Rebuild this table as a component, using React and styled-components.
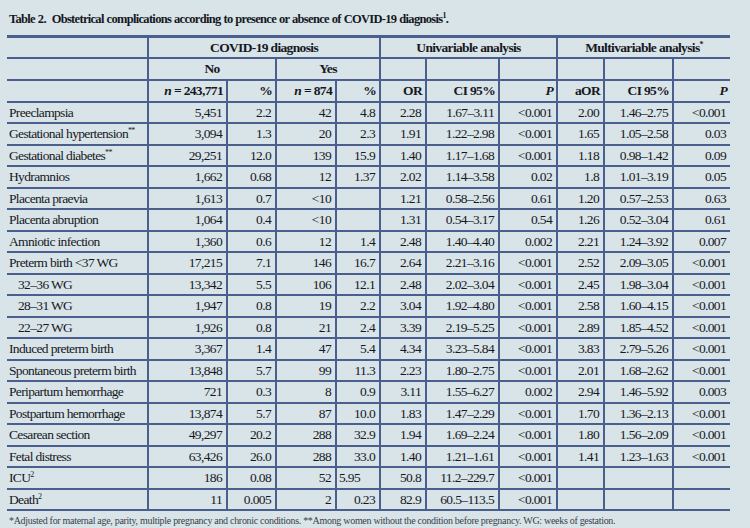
import styled, { createGlobalStyle } from 'styled-components';

const GlobalStyle = createGlobalStyle`
   html, body {
      margin: 0;
      padding: 0;
      background: #d8e4e8;
      overflow: hidden;
   }
   body {
      font-family: "Liberation Serif", "Times New Roman", serif;
      color: #16181f;
   }
`;

const LINE = '#4a5f8e';

const Page = styled.div`
   width: 750px;
   height: 528px;
   padding: 11px 0 0 7px;
   box-sizing: border-box;
   background: #d8e4e8;
`;

const Title = styled.h1`
   margin: 0 0 8px 2px;
   font-size: 12.5px;
   font-weight: bold;
   letter-spacing: -0.7px;
   word-spacing: 0.5px;
   line-height: 16px;
   sup {
      font-size: 8px;
      line-height: 0;
   }
`;

const Table = styled.table`
   width: 723px;
   table-layout: fixed;
   border-collapse: collapse;
   border-top: 3px solid ${LINE};
   border-bottom: 2px solid ${LINE};
   font-size: 13.5px;
   letter-spacing: -0.65px;
`;

const Row = styled.tr`
   height: ${(p) => (p.$head ? '21.7px' : '21.5px')};
`;

const HeadCell = styled.th`
   border: 2px solid ${LINE};
   border-top: none;
   padding: 0 3px;
   font-weight: bold;
   text-align: ${(p) => p.$align || 'center'};
   white-space: nowrap;
   &:first-child { border-left: none; }
   &:last-child { border-right: none; }
   i { font-style: italic; }
   sup {
      font-size: 8px;
      line-height: 0;
   }
`;

const Cell = styled.td`
   border: 2px solid ${LINE};
   padding: 1px ${(p) => (p.$align === 'left' ? '2px' : '4px')} 0
      ${(p) => (p.$indent ? '11px' : p.$align === 'left' ? '2px' : '4px')};
   text-align: ${(p) => p.$align || 'right'};
   white-space: nowrap;
   &:first-child { border-left: none; }
   &:last-child { border-right: none; }
   sup {
      font-size: 8px;
      line-height: 0;
   }
`;

const Footnote = styled.p`
   margin: 4px 0 0 2px;
   font-size: 10px;
   line-height: 12px;
   color: #3a3f4c;
   letter-spacing: -0.3px;
   white-space: nowrap;
`;

const widths = [141, 79, 49, 60, 44, 46, 73, 58, 47, 69, 57];

const rows = [
   ['Preeclampsia', '5,451', '2.2', '42', '4.8', '2.28', '1.67–3.11', '<0.001', '2.00', '1.46–2.75', '<0.001'],
   [<>Gestational hypertension<sup>**</sup></>, '3,094', '1.3', '20', '2.3', '1.91', '1.22–2.98', '<0.001', '1.65', '1.05–2.58', '0.03'],
   [<>Gestational diabetes<sup>**</sup></>, '29,251', '12.0', '139', '15.9', '1.40', '1.17–1.68', '<0.001', '1.18', '0.98–1.42', '0.09'],
   ['Hydramnios', '1,662', '0.68', '12', '1.37', '2.02', '1.14–3.58', '0.02', '1.8', '1.01–3.19', '0.05'],
   ['Placenta praevia', '1,613', '0.7', '<10', '', '1.21', '0.58–2.56', '0.61', '1.20', '0.57–2.53', '0.63'],
   ['Placenta abruption', '1,064', '0.4', '<10', '', '1.31', '0.54–3.17', '0.54', '1.26', '0.52–3.04', '0.61'],
   ['Amniotic infection', '1,360', '0.6', '12', '1.4', '2.48', '1.40–4.40', '0.002', '2.21', '1.24–3.92', '0.007'],
   ['Preterm birth <37 WG', '17,215', '7.1', '146', '16.7', '2.64', '2.21–3.16', '<0.001', '2.52', '2.09–3.05', '<0.001'],
   ['32–36 WG', '13,342', '5.5', '106', '12.1', '2.48', '2.02–3.04', '<0.001', '2.45', '1.98–3.04', '<0.001', true],
   ['28–31 WG', '1,947', '0.8', '19', '2.2', '3.04', '1.92–4.80', '<0.001', '2.58', '1.60–4.15', '<0.001', true],
   ['22–27 WG', '1,926', '0.8', '21', '2.4', '3.39', '2.19–5.25', '<0.001', '2.89', '1.85–4.52', '<0.001', true],
   ['Induced preterm birth', '3,367', '1.4', '47', '5.4', '4.34', '3.23–5.84', '<0.001', '3.83', '2.79–5.26', '<0.001'],
   ['Spontaneous preterm birth', '13,848', '5.7', '99', '11.3', '2.23', '1.80–2.75', '<0.001', '2.01', '1.68–2.62', '<0.001'],
   ['Peripartum hemorrhage', '721', '0.3', '8', '0.9', '3.11', '1.55–6.27', '0.002', '2.94', '1.46–5.92', '0.003'],
   ['Postpartum hemorrhage', '13,874', '5.7', '87', '10.0', '1.83', '1.47–2.29', '<0.001', '1.70', '1.36–2.13', '<0.001'],
   ['Cesarean section', '49,297', '20.2', '288', '32.9', '1.94', '1.69–2.24', '<0.001', '1.80', '1.56–2.09', '<0.001'],
   ['Fetal distress', '63,426', '26.0', '288', '33.0', '1.40', '1.21–1.61', '<0.001', '1.41', '1.23–1.63', '<0.001'],
   [<>ICU<sup>2</sup></>, '186', '0.08', '52', '5.95', '50.8', '11.2–229.7', '<0.001', '', '', ''],
   [<>Death<sup>2</sup></>, '11', '0.005', '2', '0.23', '82.9', '60.5–113.5', '<0.001', '', '', ''],
];

export default function App() {
   return (
      <Page>
         <GlobalStyle />
         <Title>
            Table 2.&nbsp; Obstetrical complications according to presence or absence of COVID-19 diagnosis<sup>1</sup>.
         </Title>
         <Table>
            <colgroup>
               {widths.map((w, i) => <col key={i} style={{ width: w }} />)}
            </colgroup>
            <thead>
               <Row $head>
                  <HeadCell />
                  <HeadCell colSpan={4}>COVID-19 diagnosis</HeadCell>
                  <HeadCell colSpan={3}>Univariable analysis</HeadCell>
                  <HeadCell colSpan={3}>Multivariable analysis<sup>*</sup></HeadCell>
               </Row>
               <Row $head>
                  <HeadCell />
                  <HeadCell colSpan={2}>No</HeadCell>
                  <HeadCell colSpan={2}>Yes</HeadCell>
                  <HeadCell />
                  <HeadCell />
                  <HeadCell />
                  <HeadCell />
                  <HeadCell />
                  <HeadCell />
               </Row>
               <Row $head>
                  <HeadCell />
                  <HeadCell $align="right"><i>n</i> = 243,771</HeadCell>
                  <HeadCell $align="right">%</HeadCell>
                  <HeadCell $align="right"><i>n</i> = 874</HeadCell>
                  <HeadCell $align="right">%</HeadCell>
                  <HeadCell $align="right">OR</HeadCell>
                  <HeadCell $align="right">CI 95%</HeadCell>
                  <HeadCell $align="right"><i>P</i></HeadCell>
                  <HeadCell $align="right">aOR</HeadCell>
                  <HeadCell $align="right">CI 95%</HeadCell>
                  <HeadCell $align="right"><i>P</i></HeadCell>
               </Row>
            </thead>
            <tbody>
               {rows.map((r, i) => (
                  <Row key={i}>
                     <Cell $align="left" $indent={r[11]}>{r[0]}</Cell>
                     {r.slice(1, 11).map((v, j) => (
                        <Cell key={j} $align={v === '5.95' ? 'left' : 'right'}>{v}</Cell>
                     ))}
                  </Row>
               ))}
            </tbody>
         </Table>
         <Footnote>
            *Adjusted for maternal age, parity, multiple pregnancy and chronic conditions. **Among women without the condition before pregnancy. WG: weeks of gestation.
         </Footnote>
      </Page>
   );
}
